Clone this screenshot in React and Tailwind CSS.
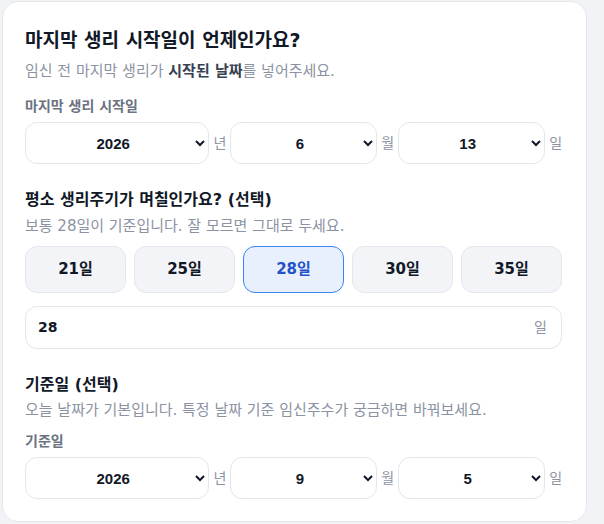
import { useState } from "react";

const sans = "font-['DejaVu_Sans','Noto_Sans_CJK_KR',sans-serif]";

function DateRow({ y, m, d }) {
  const years = [2024, 2025, 2026, 2027];
  const months = Array.from({ length: 12 }, (_, i) => i + 1);
  const days = Array.from({ length: 31 }, (_, i) => i + 1);
  const selectCls =
    "h-[42px] min-w-0 rounded-xl border border-[#e3e6ee] bg-white pl-3 pr-2 text-center [text-align-last:center] text-[15px] font-bold text-[#111827] font-['Liberation_Sans',Arial,sans-serif]";
  const unitCls = "text-[14px] text-[#8b93a3] shrink-0";
  return (
    <div className="flex items-center gap-[4px]">
      <select defaultValue={y} className={`flex-[1.3] ${selectCls}`}>
        {years.map((v) => (
          <option key={v} value={v}>{v}</option>
        ))}
      </select>
      <span className={unitCls}>년</span>
      <select defaultValue={m} className={`flex-1 ${selectCls}`}>
        {months.map((v) => (
          <option key={v} value={v}>{v}</option>
        ))}
      </select>
      <span className={unitCls}>월</span>
      <select defaultValue={d} className={`flex-1 ${selectCls}`}>
        {days.map((v) => (
          <option key={v} value={v}>{v}</option>
        ))}
      </select>
      <span className={unitCls}>일</span>
    </div>
  );
}

export default function App() {
  const [cycle, setCycle] = useState(28);
  const options = [21, 25, 28, 30, 35];

  return (
    <div className={`min-h-[524px] bg-[#f2f3f7] pl-[2px] pt-[1px] ${sans}`}>
      <div className="w-[585px] rounded-2xl border border-[#e5e7eb] bg-white pl-[22px] pr-[24px] pt-[24px] pb-[22px]">
        <h2 className="text-[19px] leading-[28px] font-bold text-[#111827]">마지막 생리 시작일이 언제인가요?</h2>
        <p className="mt-[7px] text-[15px] leading-[20px] text-[#8b93a3]">
          임신 전 마지막 생리가 <b className="font-bold text-[#374151]">시작된 날짜</b>를 넣어주세요.
        </p>
        <div className="mt-4 text-[14px] leading-[18px] font-semibold text-[#6b7280]">마지막 생리 시작일</div>
        <div className="mt-[7px]">
          <DateRow y={2026} m={6} d={13} />
        </div>

        <h3 className="mt-[25px] text-[16px] leading-[22px] font-bold text-[#111827]">평소 생리주기가 며칠인가요? (선택)</h3>
        <p className="mt-[5px] text-[15px] leading-[20px] text-[#8b93a3]">보통 28일이 기준입니다. 잘 모르면 그대로 두세요.</p>
        <div className="mt-[10px] grid grid-cols-5 gap-2">
          {options.map((o) => (
            <button
              key={o}
              onClick={() => setCycle(o)}
              className={
                o === cycle
                  ? "h-[47px] rounded-xl border border-[#3b82f6] bg-[#e9f0fd] text-[15px] font-bold text-[#2452c9]"
                  : "h-[47px] rounded-xl border border-[#e5e7ee] bg-[#f3f4f8] text-[15px] font-bold text-[#111827]"
              }
            >
              {o}일
            </button>
          ))}
        </div>
        <div className="mt-[13px] flex h-[43px] items-center rounded-xl border border-[#e3e6ee] bg-white pl-[12px] pr-[14px]">
          <input
            value={cycle}
            onChange={(e) => setCycle(Number(e.target.value) || "")}
            className="min-w-0 flex-1 bg-transparent text-[14px] font-bold text-[#111827] outline-none"
          />
          <span className="text-[14px] text-[#8b93a3]">일</span>
        </div>

        <h3 className="mt-[25px] text-[16px] leading-[22px] font-bold text-[#111827]">기준일 (선택)</h3>
        <p className="mt-1 text-[15px] leading-[20px] text-[#8b93a3]">오늘 날짜가 기본입니다. 특정 날짜 기준 임신주수가 궁금하면 바꿔보세요.</p>
        <div className="mt-3 text-[14px] leading-[18px] font-semibold text-[#6b7280]">기준일</div>
        <div className="mt-[7px]">
          <DateRow y={2026} m={9} d={5} />
        </div>
      </div>
    </div>
  );
}
